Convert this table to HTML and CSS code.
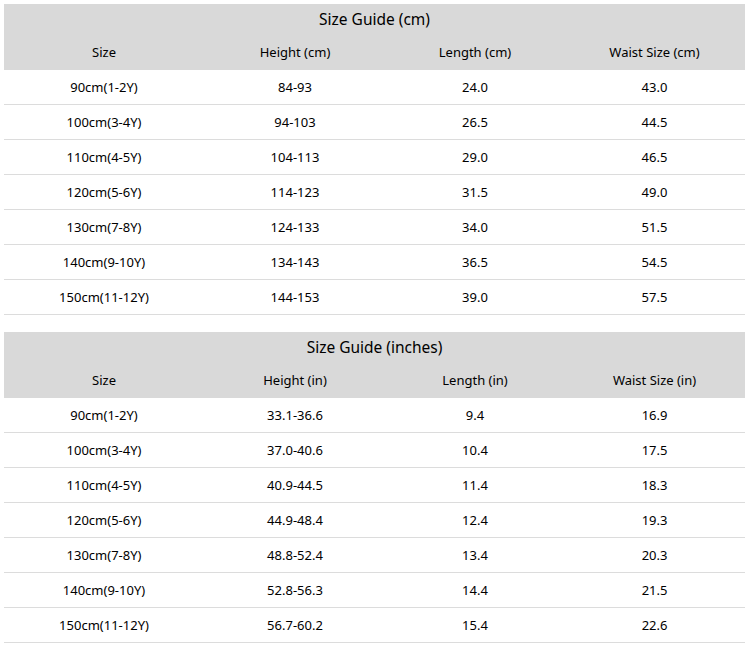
FILE: index.html
```html
<!DOCTYPE html>
<html>
<head>
<meta charset="utf-8">
<link rel="stylesheet" href="styles.css">
</head>
<body>
<div class="page">
<table class="guide">
  <colgroup><col class="c1"><col class="c2"><col class="c3"><col class="c4"></colgroup>
  <thead>
    <tr class="title"><th colspan="4">Size Guide (cm)</th></tr>
    <tr class="head"><th>Size</th><th>Height (cm)</th><th>Length (cm)</th><th>Waist Size (cm)</th></tr>
  </thead>
  <tbody>
    <tr><td>90cm(1-2Y)</td><td>84-93</td><td>24.0</td><td>43.0</td></tr>
    <tr><td>100cm(3-4Y)</td><td>94-103</td><td>26.5</td><td>44.5</td></tr>
    <tr><td>110cm(4-5Y)</td><td>104-113</td><td>29.0</td><td>46.5</td></tr>
    <tr><td>120cm(5-6Y)</td><td>114-123</td><td>31.5</td><td>49.0</td></tr>
    <tr><td>130cm(7-8Y)</td><td>124-133</td><td>34.0</td><td>51.5</td></tr>
    <tr><td>140cm(9-10Y)</td><td>134-143</td><td>36.5</td><td>54.5</td></tr>
    <tr><td>150cm(11-12Y)</td><td>144-153</td><td>39.0</td><td>57.5</td></tr>
  </tbody>
</table>
<table class="guide">
  <colgroup><col class="c1"><col class="c2"><col class="c3"><col class="c4"></colgroup>
  <thead>
    <tr class="title"><th colspan="4">Size Guide (inches)</th></tr>
    <tr class="head"><th>Size</th><th>Height (in)</th><th>Length (in)</th><th>Waist Size (in)</th></tr>
  </thead>
  <tbody>
    <tr><td>90cm(1-2Y)</td><td>33.1-36.6</td><td>9.4</td><td>16.9</td></tr>
    <tr><td>100cm(3-4Y)</td><td>37.0-40.6</td><td>10.4</td><td>17.5</td></tr>
    <tr><td>110cm(4-5Y)</td><td>40.9-44.5</td><td>11.4</td><td>18.3</td></tr>
    <tr><td>120cm(5-6Y)</td><td>44.9-48.4</td><td>12.4</td><td>19.3</td></tr>
    <tr><td>130cm(7-8Y)</td><td>48.8-52.4</td><td>13.4</td><td>20.3</td></tr>
    <tr><td>140cm(9-10Y)</td><td>52.8-56.3</td><td>14.4</td><td>21.5</td></tr>
    <tr><td>150cm(11-12Y)</td><td>56.7-60.2</td><td>15.4</td><td>22.6</td></tr>
  </tbody>
</table>
</div>
</body>
</html>
```
FILE: styles.css
```css
html, body {
  margin: 0;
  padding: 0;
  background: #ffffff;
}
.page {
  padding: 4px;
  display: flex;
  flex-direction: column;
  gap: 17px;
  font-family: "Noto Sans", "Open Sans", sans-serif;
  color: #000000;
}
.guide {
  width: 741px;
  border-collapse: collapse;
  table-layout: fixed;
  font-size: 13px;
}
.c1 { width: 200px; }
.c2 { width: 182px; }
.c3 { width: 178px; }
.c4 { width: 181px; }
.guide thead tr {
  background: #d9d9d9;
}
.guide th {
  font-weight: normal;
  text-align: center;
  padding: 0;
}
.title th {
  height: 30px;
  font-size: 15.5px;
  vertical-align: middle;
}
.head th {
  height: 36px;
}
.guide td {
  height: 34px;
  padding: 0;
  text-align: center;
  border-bottom: 1px solid #dcdcdc;
}
```
